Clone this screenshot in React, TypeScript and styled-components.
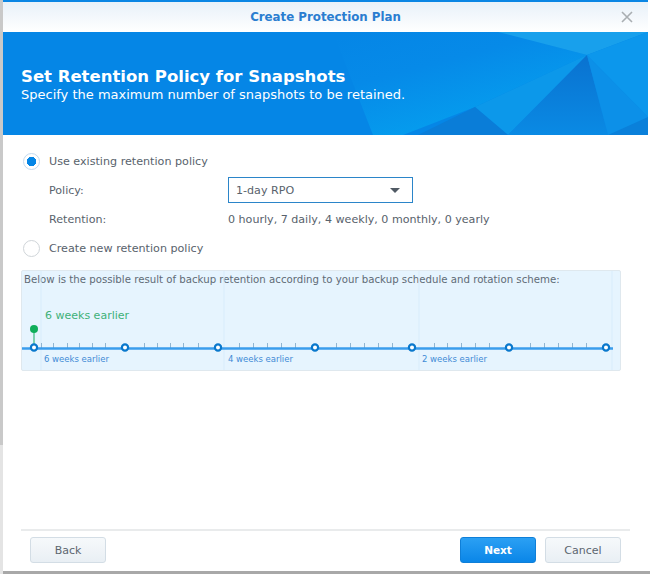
import React from "react";
import styled, { createGlobalStyle } from "styled-components";

const Global = createGlobalStyle`
  html, body { margin: 0; padding: 0; background: #fff; }
  #root { width: 650px; height: 574px; overflow: hidden; }
`;

const FONT = `"DejaVu Sans", Verdana, sans-serif`;

const Page = styled.div`
  width: 650px;
  height: 574px;
  box-sizing: border-box;
  padding: 0 2px 3px 3px;
  font-family: ${FONT};
  background: linear-gradient(#c9c9c9, #c9c9c9) left top / 3px 445px no-repeat,
    linear-gradient(#e4e4e4, #e4e4e4) left 445px / 3px 130px no-repeat,
    linear-gradient(#a8a8a8, #a8a8a8) left bottom / 100% 3px no-repeat, #fff;
`;

const Dialog = styled.div`
  height: 100%;
  box-sizing: border-box;
  background: #fff;
  border-top: 2px solid #0a86e4;
  display: flex;
  flex-direction: column;
`;

const TitleBar = styled.div`
  height: 30px;
  flex: none;
  display: flex;
  align-items: center;
  justify-content: center;
  position: relative;
  background: linear-gradient(#e8f1f9, #ffffff);
  color: #2a7dd0;
  font-size: 11.8px;
  font-weight: bold;
`;

const Close = styled.svg`
  position: absolute;
  right: 15px;
  top: 9px;
  width: 12px;
  height: 12px;
`;

const Banner = styled.div`
  height: 103px;
  flex: none;
  box-sizing: border-box;
  padding: 35px 18px 0;
  position: relative;
  overflow: hidden;
  background: #0586e6;
  color: #fff;
`;

const BannerArt = styled.svg`
  position: absolute;
  left: 0;
  top: 0;
  width: 645px;
  height: 103px;
`;

const BannerTitle = styled.div`
  position: relative;
  font-size: 16.5px;
  line-height: 20px;
  font-weight: bold;
`;

const BannerSub = styled.div`
  position: relative;
  font-size: 13px;
  line-height: 15px;
`;

const Body = styled.div`
  flex: 1;
  box-sizing: border-box;
  padding: 14px 27px 0 18px;
  display: flex;
  flex-direction: column;
`;

const OptionRow = styled.div<{ $top?: number }>`
  height: 24px;
  margin-top: ${(p) => p.$top ?? 0}px;
  margin-left: 2px;
  display: flex;
  align-items: center;
  gap: 9px;
  color: #58626c;
  font-size: 11.15px;
`;

const Radio = styled.span<{ $on?: boolean }>`
  width: 17px;
  height: 17px;
  box-sizing: border-box;
  border-radius: 50%;
  border: 1px solid ${(p) => (p.$on ? "#c4daee" : "#d0d5d9")};
  background: ${(p) => (p.$on ? "radial-gradient(circle, #0586e6 0 4.5px, #fff 5px)" : "#fff")};
`;

const FieldRow = styled.div<{ $top: number }>`
  display: flex;
  align-items: center;
  margin-top: ${(p) => p.$top}px;
  padding-left: 28px;
  color: #58626c;
  font-size: 11.1px;
`;

const FieldLabel = styled.div`
  width: 179px;
`;

const Select = styled.div`
  width: 185px;
  height: 26px;
  box-sizing: border-box;
  border: 1px solid #2b85c9;
  padding: 0 12px 0 7px;
  display: flex;
  align-items: center;
  justify-content: space-between;
`;

const Caret = styled.span`
  width: 0;
  height: 0;
  border-left: 5px solid transparent;
  border-right: 5px solid transparent;
  border-top: 5px solid #505a64;
`;

const Timeline = styled.div`
  margin-top: 10px;
  width: 600px;
  height: 101px;
  box-sizing: border-box;
  border: 1px solid #dfe8ee;
  border-radius: 2px;
  background: #e6f4fe;
  position: relative;
  color: #5f6b76;
  font-size: 10.2px;
  padding: 2px;
  line-height: 13px;
  white-space: nowrap;
`;

const Chart = styled.svg`
  position: absolute;
  left: 0;
  top: 0;
  width: 598px;
  height: 99px;
`;

const Footer = styled.div`
  flex: none;
  box-sizing: border-box;
  margin: 0 18px;
  border-top: 2px solid #e9ebec;
  height: 42px;
  padding: 6px 9px 0 9px;
  display: flex;
  justify-content: space-between;
`;

const Actions = styled.div`
  display: flex;
  gap: 9px;
`;

const Button = styled.button<{ $primary?: boolean }>`
  width: 76px;
  height: 26px;
  border-radius: 3px;
  box-sizing: border-box;
  font-family: ${FONT};
  font-size: ${(p) => (p.$primary ? "10.5px" : "11px")};
  padding: 0;
  font-weight: ${(p) => (p.$primary ? "bold" : "normal")};
  color: ${(p) => (p.$primary ? "#fff" : "#5c6670")};
  border: 1px solid ${(p) => (p.$primary ? "#0f7fd8" : "#d3dde5")};
  background: ${(p) =>
    p.$primary ? "linear-gradient(#2ba0f4, #0a86e8)" : "linear-gradient(#f6f9fb, #e9eff4)"};
`;

const nodes = [12, 103, 196, 293, 390, 487, 584];
const ticks = [19, 31, 45, 57, 70, 83, 122, 135, 148, 161, 176, 217, 231, 245, 259, 273, 314, 328, 342, 356, 370, 412, 425, 439, 453, 467, 508, 522, 536, 550, 564];

export default function App() {
  return (
    <Page>
      <Global />
      <Dialog>
        <TitleBar>
          Create Protection Plan
          <Close viewBox="0 0 12 12">
            <path d="M1 1 L11 11 M11 1 L1 11" stroke="#a9aeb2" strokeWidth="1.6" fill="none" />
          </Close>
        </TitleBar>
        <Banner>
          <BannerArt viewBox="0 0 645 103">
            <defs>
              <linearGradient id="glow" x1="0.1" y1="0" x2="0.75" y2="1">
                <stop offset="0" stopColor="#0586e6" />
                <stop offset="0.35" stopColor="#068ae8" />
                <stop offset="1" stopColor="#05a4f0" />
              </linearGradient>
              <linearGradient id="deep" x1="0" y1="0" x2="0" y2="1">
                <stop offset="0" stopColor="#0a72d0" />
                <stop offset="1" stopColor="#0a8ae4" />
              </linearGradient>
            </defs>
            <polygon points="330,0 495,0 584,23 472,75 400,103 370,103" fill="url(#glow)" />
            <polygon points="495,0 645,0 584,23" fill="#18a0ec" />
            <polygon points="472,75 584,23 505,103" fill="#0c98ea" />
            <polygon points="472,75 505,103 415,103" fill="#0a7dd8" />
            <polygon points="584,23 605,103 505,103" fill="url(#deep)" />
            <polygon points="584,23 645,85 645,103 605,103" fill="#0c90e8" />
            <polygon points="584,23 645,0 645,85" fill="#0c97ec" />
            <polygon points="605,103 645,85 645,103" fill="#0a80da" />
          </BannerArt>
          <BannerTitle>Set Retention Policy for Snapshots</BannerTitle>
          <BannerSub>Specify the maximum number of snapshots to be retained.</BannerSub>
        </Banner>
        <Body>
          <OptionRow>
            <Radio $on />
            Use existing retention policy
          </OptionRow>
          <FieldRow $top={4}>
            <FieldLabel>Policy:</FieldLabel>
            <Select>
              1-day RPO
              <Caret />
            </Select>
          </FieldRow>
          <FieldRow $top={10}>
            <FieldLabel>Retention:</FieldLabel>
            0 hourly, 7 daily, 4 weekly, 0 monthly, 0 yearly
          </FieldRow>
          <OptionRow $top={10}>
            <Radio />
            Create new retention policy
          </OptionRow>
          <Timeline>
            Below is the possible result of backup retention according to your backup schedule and rotation scheme:
            <Chart viewBox="0 0 598 99">
              {[19, 202, 397, 590].map((x) => (
                <line key={x} x1={x} x2={x} y1={0} y2={99} stroke="#d8ecfb" />
              ))}
              {ticks.map((x) => (
                <line key={x} x1={x + 0.5} x2={x + 0.5} y1={72} y2={77} stroke="#7ba4c4" strokeWidth="0.8" />
              ))}
              <line x1={0} x2={591} y1={77.5} y2={77.5} stroke="#3a9dec" strokeWidth="2.5" />
              <line x1={12} x2={12} y1={58} y2={76} stroke="#16ad62" strokeWidth="1" />
              <circle cx={12} cy={58} r={4} fill="#0fae5a" />
              {nodes.map((x) => (
                <circle key={x} cx={x} cy={76.5} r={3.1} fill="#fff" stroke="#0a78cc" strokeWidth="2.2" />
              ))}
              <text x={23} y={48} fontSize="11" fill="#3fb178" fontFamily={FONT}>6 weeks earlier</text>
              <text x={22} y={91} fontSize="8.5" fill="#3f8bd6" fontFamily={FONT}>6 weeks earlier</text>
              <text x={206} y={91} fontSize="8.5" fill="#3f8bd6" fontFamily={FONT}>4 weeks earlier</text>
              <text x={400} y={91} fontSize="8.5" fill="#3f8bd6" fontFamily={FONT}>2 weeks earlier</text>
            </Chart>
          </Timeline>
        </Body>
        <Footer>
          <Button>Back</Button>
          <Actions>
            <Button $primary>Next</Button>
            <Button>Cancel</Button>
          </Actions>
        </Footer>
      </Dialog>
    </Page>
  );
}
